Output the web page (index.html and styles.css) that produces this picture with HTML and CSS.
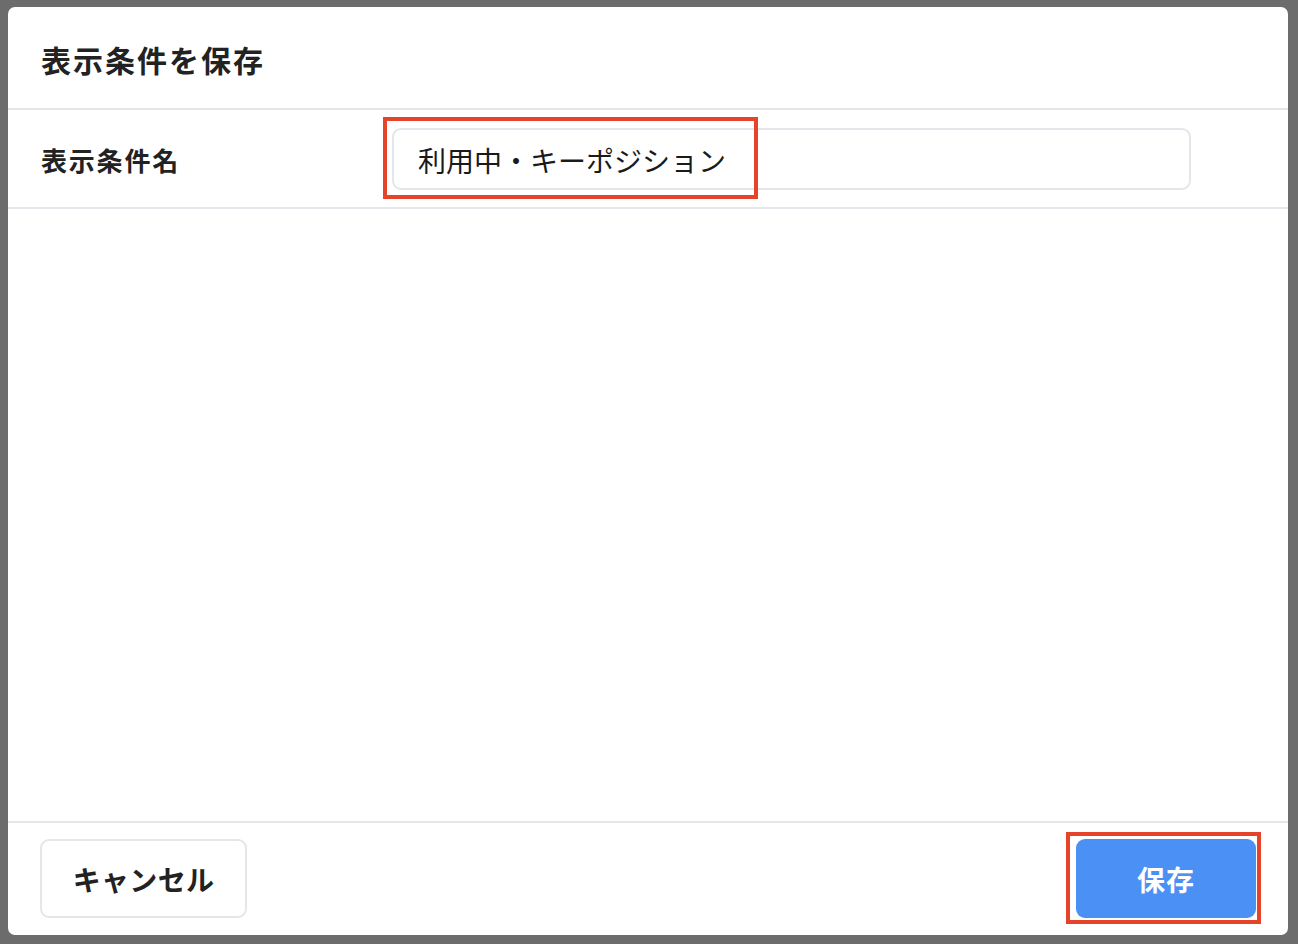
FILE: index.html
```html
<!DOCTYPE html>
<html lang="ja">
<head>
<meta charset="utf-8">
<link rel="stylesheet" href="styles.css">
</head>
<body>
<div class="modal">
  <div class="modal-header">
    <h1 class="title">表示条件を保存</h1>
  </div>
  <div class="form-row">
    <div class="label">表示条件名</div>
    <div class="input-wrap">
      <div class="input">利用中・キーポジション</div>
      <div class="mark mark-input"></div>
    </div>
  </div>
  <div class="spacer"></div>
  <div class="modal-footer">
    <button class="btn btn-cancel">キャンセル</button>
    <div class="save-wrap">
      <button class="btn btn-save">保存</button>
      <div class="mark mark-save"></div>
    </div>
  </div>
</div>
</body>
</html>
```
FILE: styles.css
```css
html, body {
  margin: 0;
  padding: 0;
}
body {
  background: #6c6c6c;
  width: 1298px;
  height: 944px;
  box-sizing: border-box;
  padding: 7px 10px 9px 8px;
  font-family: "Noto Sans CJK JP", "Noto Sans", sans-serif;
  color: #222;
}
.modal {
  width: 1280px;
  height: 928px;
  background: #fff;
  border-radius: 7px;
  display: flex;
  flex-direction: column;
  overflow: visible;
}
.modal-header {
  height: 103px;
  border-bottom: 2px solid #e3e6ea;
  display: flex;
  align-items: center;
  padding-left: 33px;
  box-sizing: border-box;
}
.title {
  margin: 0;
  font-size: 30px;
  font-weight: 700;
  letter-spacing: 2px;
  line-height: 1;
  padding-top: 2px;
}
.form-row {
  height: 99px;
  border-bottom: 2px solid #e3e6ea;
  box-sizing: border-box;
  display: flex;
  align-items: center;
  padding-left: 33px;
}
.label {
  width: 351px;
  font-size: 26px;
  font-weight: 700;
  letter-spacing: 1.8px;
  line-height: 1;
  padding-top: 2px;
}
.input-wrap {
  position: relative;
}
.input {
  width: 799px;
  height: 62px;
  box-sizing: border-box;
  border: 2px solid #e3e6ea;
  border-radius: 9px;
  padding-left: 24px;
  font-size: 28px;
  line-height: 60px;
  color: #1a1a1a;
}
.mark {
  position: absolute;
  border: 4px solid #e5442b;
  box-sizing: border-box;
  pointer-events: none;
}
.mark-input {
  left: -9px;
  top: -11px;
  width: 375px;
  height: 82px;
}
.spacer {
  flex: 1;
}
.modal-footer {
  border-top: 2px solid #e3e6ea;
  height: 114px;
  box-sizing: border-box;
  display: flex;
  justify-content: space-between;
  align-items: flex-start;
  padding: 16px 32px 0 32px;
}
.btn {
  font-family: "Noto Sans CJK JP", "Noto Sans", sans-serif;
  font-size: 28px;
  font-weight: 700;
  height: 79px;
  border-radius: 9px;
  box-sizing: border-box;
  cursor: pointer;
  line-height: 1;
  padding: 0;
}
.btn-cancel {
  width: 207px;
  background: #fff;
  border: 2px solid #e3e6ea;
  color: #222;
  letter-spacing: 0.3px;
}
.save-wrap {
  position: relative;
}
.btn-save {
  width: 180px;
  background: #4a90f5;
  border: none;
  color: #fff;
  letter-spacing: 1px;
}
.mark-save {
  left: -10px;
  top: -7px;
  width: 195px;
  height: 92px;
}
```
